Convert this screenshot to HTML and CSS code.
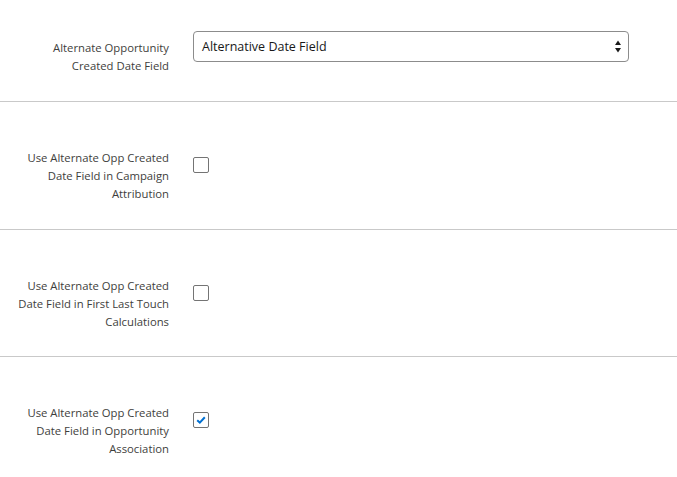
FILE: index.html
```html
<!DOCTYPE html>
<html lang="en">
<head>
  <meta charset="UTF-8" />
  <title>Opportunity Date Settings</title>
  <link rel="stylesheet" href="styles.css">
</head>
<body>
  <div class="settings">
    <div class="setting-row first">
      <div class="setting-label">Alternate Opportunity Created Date Field</div>
      <div class="setting-field">
        <div class="select-box">
          <span class="select-value">Alternative Date Field</span>
          <svg class="select-arrows" width="6" height="13" viewBox="0 0 6 13">
            <path d="M3 0.5 L6 5 L0 5 Z" fill="#1a1a1a"/>
            <path d="M3 12.5 L6 8 L0 8 Z" fill="#1a1a1a"/>
          </svg>
        </div>
      </div>
    </div>
    <div class="setting-row">
      <div class="setting-label">Use Alternate Opp Created Date Field in Campaign Attribution</div>
      <div class="setting-field">
        <span class="check-box"></span>
      </div>
    </div>
    <div class="setting-row">
      <div class="setting-label">Use Alternate Opp Created Date Field in First Last Touch Calculations</div>
      <div class="setting-field">
        <span class="check-box"></span>
      </div>
    </div>
    <div class="setting-row last">
      <div class="setting-label">Use Alternate Opp Created Date Field in Opportunity Association</div>
      <div class="setting-field">
        <span class="check-box checked">
          <svg width="10" height="8" viewBox="0 0 10 8">
            <path d="M1.2 4.3 L3.8 6.6 L8.8 1.2" fill="none" stroke="#0070d2" stroke-width="2"/>
          </svg>
        </span>
      </div>
    </div>
  </div>
</body>
</html>
```

FILE: styles.css
```css
body {
  margin: 0;
  background: #fff;
  font-family: 'Open Sans', 'Noto Sans', Arial, sans-serif;
  color: #3e3e3c;
}
.settings {
  display: flex;
  flex-direction: column;
}
.setting-row {
  display: flex;
  align-items: flex-start;
  padding: 39px 0 25.5px;
  border-bottom: 1px solid #c9c9c9;
}
.setting-row.first {
  padding-top: 31px;
  padding-bottom: 26px;
}
.setting-row.last {
  border-bottom: none;
}
.setting-label {
  width: 155px;
  margin-left: 14px;
  margin-right: 24px;
  padding-top: 8px;
  text-align: right;
  font-size: 11.3px;
  line-height: 18px;
}
.setting-field {
  padding-top: 16px;
}
.setting-row.first .setting-field {
  padding-top: 0;
}
.select-box {
  width: 419px;
  height: 29px;
  border: 1px solid #8c8c8c;
  border-radius: 4px;
  display: flex;
  align-items: center;
  justify-content: space-between;
  padding: 0 7px 0 8px;
}
.select-value {
  font-size: 12.5px;
  color: #181818;
}
.check-box {
  width: 14px;
  height: 14px;
  border: 1px solid #747474;
  border-radius: 2px;
  display: flex;
  align-items: center;
  justify-content: center;
}
```
